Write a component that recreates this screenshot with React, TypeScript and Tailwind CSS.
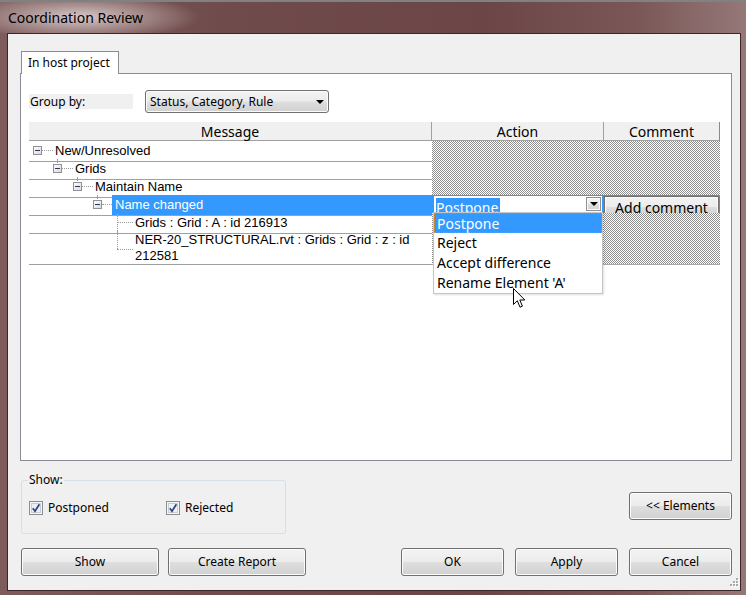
import React from 'react';

const ui = "font-['Noto_Sans',sans-serif]";
const tree = "font-['Liberation_Sans',Arial,sans-serif]";
const hatch =
  'bg-[image:repeating-conic-gradient(#8e8e8e_0_25%,#ffffff_0_50%)] bg-[length:2px_2px] border-b border-[#a8a8a8]';
const btnFace =
  'bg-[linear-gradient(180deg,#f3f3f3_0%,#ececec_48%,#dedede_52%,#d1d1d1_100%)] shadow-[inset_0_0_0_1px_#fbfbfb]';

function MinusBox() {
  return (
    <svg width="9" height="9" viewBox="0 0 9 9" className="shrink-0">
      <defs>
        <linearGradient id="mb" x1="0" y1="0" x2="1" y2="1">
          <stop offset="0" stopColor="#ffffff" />
          <stop offset="1" stopColor="#d8d8d8" />
        </linearGradient>
      </defs>
      <rect x="0.5" y="0.5" width="8" height="8" fill="url(#mb)" stroke="#919191" />
      <rect x="2" y="4" width="5" height="1" fill="#233a63" />
    </svg>
  );
}

function HDots({ w }: { w: string }) {
  return <span className={`h-0 shrink-0 border-t border-dotted border-[#9a9a9a] ${w}`} />;
}

function Btn({ label, w }: { label: string; w: string }) {
  return (
    <button
      className={`h-[28px] rounded-[3px] border border-[#707070] text-[12px] text-black ${btnFace} ${w}`}
    >
      {label}
    </button>
  );
}

function Check({ label, w }: { label: string; w: string }) {
  return (
    <div className={`flex items-center ${w}`}>
      <svg width="14" height="14" viewBox="0 0 14 14" className="shrink-0">
        <rect x="0.5" y="0.5" width="13" height="13" fill="#f4f4f4" stroke="#8e8f8f" />
        <rect x="2.5" y="2.5" width="9" height="9" fill="#eef0f4" stroke="#c8ccd4" />
        <path d="M3.8 7.2 L6 10.2 L10.4 3.2" fill="none" stroke="#31468a" strokeWidth="1.8" />
      </svg>
      <span className="ml-[5px] text-[12px]">{label}</span>
    </div>
  );
}

function DownArrow() {
  return (
    <svg width="8" height="4" viewBox="0 0 8 4">
      <path d="M0 0H8L4 4Z" fill="#000" />
    </svg>
  );
}

export default function App() {
  return (
    <div className="flex h-[595px] w-[746px] flex-col overflow-hidden border-t-2 border-[#7f8282] bg-[linear-gradient(90deg,#7e5c5c_0%,#704b4b_30%,#6c4646_65%,#7a5656_85%,#957878_100%)]">
      {/* Title bar */}
      <div className="flex h-[31px] items-center bg-[radial-gradient(ellipse_120px_24px_at_80px_15px,rgba(225,212,212,0.9),rgba(225,212,212,0)_100%)] pl-[8px]">
        <span className={`${ui} text-[14px] text-black`}>Coordination Review</span>
      </div>

      {/* Client area */}
      <div className={`${ui} relative ml-[7px] mr-[5px] h-[558px] border border-[#3a2828] bg-[#f0f0f0] pl-[12px] pr-[8px] pt-[17px] text-black`}>
        {/* Tab */}
        <div className="relative z-10 -mb-px ml-px flex h-[23px] w-[98px] items-center border border-b-0 border-[#898c95] bg-white pl-[6px] text-[12px]">
          In host project
        </div>

        {/* Tab panel */}
        <div className="h-[388px] border border-[#898c95] bg-white">
          <div className="mt-[16px] flex h-[23px] items-center pl-[8px]">
            <div className="h-[15px] w-[104px] bg-[#f0f0f0] pl-px text-[12px] leading-[15px]">Group by:</div>
            <div className={`ml-[12px] flex h-[23px] w-[184px] items-center justify-between rounded-[3px] border border-[#707070] px-[4px] text-[12px] ${btnFace}`}>
              <span>Status, Category, Rule</span>
              <DownArrow />
            </div>
          </div>

          {/* Table */}
          <div className="relative ml-[8px] mt-[9px] w-[691px]">
            <div className="grid h-[19px] grid-cols-[403px_172px_116px] border-b border-[#a0a0a0] bg-[#f0f0f0] text-[14px] leading-[19px]">
              <div className="border-r border-[#a0a0a0] text-center">Message</div>
              <div className="border-r border-[#a0a0a0] text-center">Action</div>
              <div className="border-r border-[#8a8a8a] text-center">Comment</div>
            </div>

            <div className={`${tree} text-[13px]`}>
              {/* New/Unresolved */}
              <div className="grid h-[18px] grid-cols-[403px_172px_116px]">
                <div className="flex items-center border-b border-[#a0a0a0] pl-[4px]">
                  <MinusBox />
                  <HDots w="w-[11px]" />
                  <span className="ml-[2px]">New/Unresolved</span>
                </div>
                <div className={hatch} />
                <div className={hatch} />
              </div>

              {/* Grids */}
              <div className="grid h-[18px] grid-cols-[403px_172px_116px]">
                <div className="relative flex items-center border-b border-[#a0a0a0] pl-[24px]">
                  <span className="absolute left-[28px] top-0 h-[4px] border-l border-dotted border-[#9a9a9a]" />
                  <MinusBox />
                  <HDots w="w-[11px]" />
                  <span className="ml-[2px]">Grids</span>
                </div>
                <div className={hatch} />
                <div className={hatch} />
              </div>

              {/* Maintain Name */}
              <div className="grid h-[18px] grid-cols-[403px_172px_116px]">
                <div className="relative flex items-center border-b border-[#a0a0a0] pl-[44px]">
                  <span className="absolute left-[48px] top-0 h-[4px] border-l border-dotted border-[#9a9a9a]" />
                  <MinusBox />
                  <HDots w="w-[11px]" />
                  <span className="ml-[2px]">Maintain Name</span>
                </div>
                <div className={hatch} />
                <div className={hatch} />
              </div>

              {/* Name changed (selected) */}
              <div className="grid h-[18px] grid-cols-[403px_172px_116px]">
                <div className="relative flex items-center border-b border-[#a0a0a0] pl-[64px]">
                  <span className="absolute left-[68px] top-0 h-[4px] border-l border-dotted border-[#9a9a9a]" />
                  <MinusBox />
                  <HDots w="w-[10px]" />
                  <span className="flex h-full flex-1 items-center bg-[#3399ff] pl-[3px] text-white">Name changed</span>
                </div>
                <div className={`overflow-hidden border-b border-[#a0a0a0] bg-[#3399ff] pl-[2px] pt-px ${ui}`}>
                  <div className="relative h-[22px] w-[168px] bg-white">
                    <span className="ml-[2px] mt-[2px] inline-block bg-[#3399ff] pr-[2px] text-[14px] leading-[20px] text-white">Postpone</span>
                    <span className={`absolute right-[1px] top-[1px] flex h-[14px] w-[15px] items-center justify-center border border-[#8f8f8f] ${btnFace}`}>
                      <DownArrow />
                    </span>
                  </div>
                </div>
                <div className={`overflow-hidden border-b border-[#a0a0a0] bg-[#3399ff] pt-px ${ui}`}>
                  <div className={`h-[22px] w-[115px] border border-[#707070] text-center text-[14px] leading-[22px] ${btnFace}`}>
                    Add comment
                  </div>
                </div>
              </div>

              {/* Grids : Grid : A */}
              <div className="grid h-[18px] grid-cols-[403px_172px_116px]">
                <div className="relative flex items-center border-b border-[#a0a0a0] pl-[88px]">
                  <span className="absolute left-[88px] top-0 h-[18px] border-l border-dotted border-[#9a9a9a]" />
                  <HDots w="w-[16px]" />
                  <span className="ml-[2px]">Grids : Grid : A : id 216913</span>
                </div>
                <div className={hatch} />
                <div className={hatch} />
              </div>

              {/* NER-20 */}
              <div className="grid h-[34px] grid-cols-[403px_172px_116px]">
                <div className="relative flex items-start border-b border-[#a0a0a0] pl-[88px]">
                  <span className="absolute left-[88px] top-0 h-[18px] border-l border-dotted border-[#9a9a9a]" />
                  <HDots w="w-[16px] mt-[18px]" />
                  <span className="ml-[2px] pt-px leading-[16px]">
                    NER-20_STRUCTURAL.rvt : Grids : Grid : z : id
                    <br />
                    212581
                  </span>
                </div>
                <div className={hatch} />
                <div className={hatch} />
              </div>
            </div>

            {/* Open combo list */}
            <div className="absolute left-[404px] top-[90px] h-[82px] w-[170px] border border-[#c5c5c5] bg-white text-[14px] leading-[19px] shadow-[1px_1px_2px_rgba(0,0,0,0.12)]">
              <div className="h-[20px] border border-dotted border-[#d08a3c] bg-[#3399ff] pl-[2px] text-white">Postpone</div>
              <div className="h-[20px] pl-[3px]">Reject</div>
              <div className="h-[20px] pl-[3px]">Accept difference</div>
              <div className="h-[20px] pl-[3px]">Rename Element 'A'</div>
            </div>

            {/* Mouse pointer */}
            <svg width="13" height="21" viewBox="0 0 13 21" className="absolute left-[484px] top-[166px]">
              <path d="M0.5 0.5 L0.5 16.5 L4.3 12.8 L7 19.2 L9.4 18.2 L6.8 12 L11.8 12 Z" fill="#fff" stroke="#000" strokeWidth="1" strokeLinejoin="round" />
            </svg>
          </div>
        </div>

        {/* Show group and Elements button */}
        <div className="mt-[19px] flex items-start justify-between">
          <div className="relative ml-px h-[54px] w-[265px] rounded-[3px] border border-[#d5dfe5] pl-[7px] pt-[18px]">
            <span className="absolute -top-[9px] left-[6px] bg-[#f0f0f0] px-[1px] text-[12px] leading-[16px]">Show:</span>
            <div className="flex items-center">
              <Check label="Postponed" w="w-[137px]" />
              <Check label="Rejected" w="w-[100px]" />
            </div>
          </div>
          <div className="mt-[12px]">
            <Btn label="<< Elements" w="w-[103px]" />
          </div>
        </div>

        {/* Bottom buttons */}
        <div className="mt-[14px] flex items-center">
          <div className="ml-px flex gap-[9px]">
            <Btn label="Show" w="w-[138px]" />
            <Btn label="Create Report" w="w-[138px]" />
          </div>
          <div className="ml-auto flex gap-[11px]">
            <Btn label="OK" w="w-[103px]" />
            <Btn label="Apply" w="w-[103px]" />
            <Btn label="Cancel" w="w-[103px]" />
          </div>
        </div>

        {/* Resize grip */}
        <svg width="11" height="11" viewBox="0 0 11 11" className="absolute bottom-[1px] right-[1px]">
          {[
            [8, 0], [8, 3], [5, 3], [8, 6], [5, 6], [2, 6],
          ].map(([x, y], i) => (
            <g key={i}>
              <rect x={x + 1} y={y + 1} width="2" height="2" fill="#ffffff" />
              <rect x={x} y={y} width="2" height="2" fill="#a9a9a9" />
            </g>
          ))}
        </svg>
      </div>
    </div>
  );
}
